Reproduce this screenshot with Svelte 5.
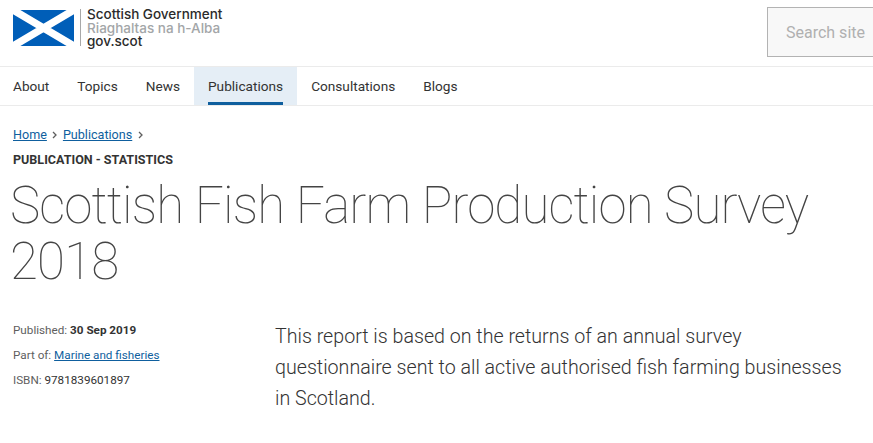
<script>
  const navItems = ['About', 'Topics', 'News', 'Publications', 'Consultations', 'Blogs'];
  const current = 'Publications';
</script>

<style>
  :global(body) {
    font-family: Roboto, sans-serif;
    color: #333;
    background: #fff;
    overflow: hidden;
  }
  .header {
    height: 66px;
    display: flex;
    justify-content: space-between;
    border-bottom: 1px solid #ebebeb;
    padding-left: 13px;
    overflow: hidden;
  }
  .logo {
    display: flex;
    align-items: flex-start;
    padding-top: 8px;
  }
  .logo__flag {
    display: block;
    width: 61px;
    height: 36px;
    margin-top: 2px;
  }
  .logo__rule {
    width: 1px;
    height: 37px;
    margin: 1px 6px 0 6px;
    background: #a8a8a8;
  }
  .logo__text {
    font-family: Inter, sans-serif;
    font-size: 13.5px;
    line-height: 13.5px;
    font-weight: 500;
    color: #2b2b2b;
  }
  .logo__line--gael {
    color: #a3a6a8;
  }
  .search {
    box-sizing: border-box;
    width: 120px;
    height: 50px;
    margin-top: 7px;
    margin-right: -14px;
    padding: 0 18px;
    border: 1px solid #b3b3b3;
    background: #f8f8f8;
    color: #b0b0b0;
    font-size: 16px;
    line-height: 49px;
    white-space: nowrap;
  }
  .nav {
    display: flex;
    height: 38px;
    border-bottom: 1px solid #ebebeb;
    margin-left: -1px;
    font-size: 13.65px;
  }
  .nav__item {
    padding: 0 14px;
    line-height: 38px;
    color: #333;
  }
  .nav__item--current {
    background: #e5eef6;
  }
  .nav__label {
    display: block;
    height: 38px;
    box-sizing: border-box;
  }
  .nav__item--current .nav__label {
    border-bottom: 3px solid #0f5f9e;
  }
  .main {
    padding: 20px 13px 0 13px;
  }
  .crumbs {
    display: flex;
    align-items: center;
    gap: 5.5px;
    font-size: 12.6px;
    line-height: 17px;
  }
  .crumbs a, .meta a {
    color: #0f5f9e;
    text-decoration: underline;
  }
  .chev {
    width: 5px;
    height: 8px;
  }
  .label {
    margin-top: 9px;
    font-size: 12.55px;
    line-height: 16px;
    font-weight: 700;
    color: #333;
  }
  h1 {
    margin: 10px 0 0 -3px;
    font-size: 51px;
    line-height: 56px;
    font-weight: 100;
    letter-spacing: -0.85px;
    color: #444;
  }
  .cols {
    display: flex;
    margin-top: 31px;
  }
  .meta {
    width: 262px;
    flex: none;
    margin-top: -3px;
    font-size: 11.7px;
    line-height: 25px;
    color: #5e5e5e;
  }
  .meta strong,
  .meta span {
    color: #333;
  }
  .lede {
    margin: 0;
    width: 580px;
    font-size: 19.65px;
    line-height: 31px;
    font-weight: 300;
    color: #333;
  }
</style>

<header class="header">
  <div class="logo">
    <svg class="logo__flag" viewBox="0 0 61 36">
      <rect width="61" height="36" fill="#005eb8" />
      <path d="M0 0 L61 36 M61 0 L0 36" stroke="#fff" stroke-width="7.5" />
    </svg>
    <div class="logo__rule"></div>
    <div class="logo__text">
      <div>Scottish Government</div>
      <div class="logo__line--gael">Riaghaltas na h-Alba</div>
      <div>gov.scot</div>
    </div>
  </div>
  <div class="search">Search site</div>
</header>

<nav class="nav">
  {#each navItems as item}
    <div class="nav__item" class:nav__item--current={item === current}>
      <span class="nav__label">{item}</span>
    </div>
  {/each}
</nav>

<main class="main">
  <div class="crumbs">
    <a href="#home">Home</a>
    <svg class="chev" viewBox="0 0 5 8"><path d="M1 1 L4 4 L1 7" fill="none" stroke="#5e5e5e" stroke-width="1.3" /></svg>
    <a href="#publications">Publications</a>
    <svg class="chev" viewBox="0 0 5 8"><path d="M1 1 L4 4 L1 7" fill="none" stroke="#5e5e5e" stroke-width="1.3" /></svg>
  </div>
  <div class="label">PUBLICATION - STATISTICS</div>
  <h1>Scottish Fish Farm Production Survey 2018</h1>
  <div class="cols">
    <div class="meta">
      <div>Published: <strong>30 Sep 2019</strong></div>
      <div>Part of: <a href="#topic">Marine and fisheries</a></div>
      <div>ISBN: <span>9781839601897</span></div>
    </div>
    <p class="lede">This report is based on the returns of an annual survey questionnaire sent to all active authorised fish farming businesses in Scotland.</p>
  </div>
</main>
